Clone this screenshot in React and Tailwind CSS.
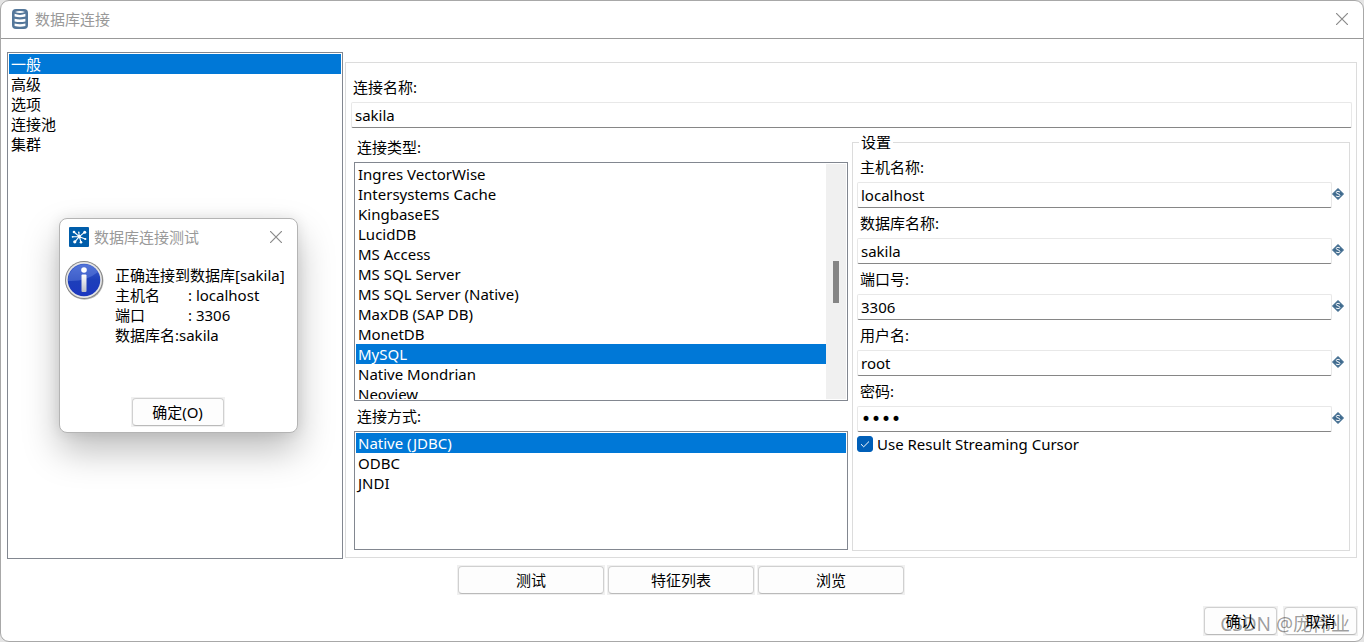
import { useState } from "react";

const sections = ["一般", "高级", "选项", "连接池", "集群"];

const databaseTypes = [
  "Ingres VectorWise",
  "Intersystems Cache",
  "KingbaseES",
  "LucidDB",
  "MS Access",
  "MS SQL Server",
  "MS SQL Server (Native)",
  "MaxDB (SAP DB)",
  "MonetDB",
  "MySQL",
  "Native Mondrian",
  "Neoview",
];

const accessMethods = ["Native (JDBC)", "ODBC", "JNDI"];

const settings = [
  { id: "host", label: "主机名称:", value: "localhost" },
  { id: "database", label: "数据库名称:", value: "sakila" },
  { id: "port", label: "端口号:", value: "3306" },
  { id: "user", label: "用户名:", value: "root" },
  { id: "password", label: "密码:", value: "pass", type: "password" },
];

function DatabaseIcon() {
  return (
    <svg className="h-5 w-4 shrink-0" viewBox="0 0 16 20" aria-hidden="true">
      <rect x="0" y="0" width="16" height="20" rx="4" fill="#54779a" />
      <path d="M3 3Q8 1 13 3Q8 4.8 3 3Z" fill="#fff" />
      <path d="M2.6 4.8Q8 7 13.4 4.8V7.6Q8 9 2.6 7.6Z" fill="#fff" />
      <path d="M2.6 9.8Q8 11.2 13.4 9.8V12.4Q8 13.8 2.6 12.4Z" fill="#fff" />
      <path d="M2.6 14.6Q8 16 13.4 14.6V17Q8 18.4 2.6 17Z" fill="#fff" />
    </svg>
  );
}

function CloseIcon() {
  return (
    <svg className="h-3 w-3" viewBox="0 0 12 12" fill="none" stroke="#8a8a8a" strokeWidth="1.2" aria-hidden="true">
      <path d="M0 0L12 12M12 0L0 12" />
    </svg>
  );
}

function HubIcon() {
  return (
    <svg className="h-5 w-5 shrink-0" viewBox="0 0 20 20" aria-hidden="true">
      <rect width="20" height="20" rx="1" fill="#005daa" />
      <path
        d="M10.3 9.7L5 5M10.3 9.7L9.8 5.5M10.3 9.7L15.7 5.2M10.3 9.7L3.6 9.8M10.3 9.7L16.3 12M10.3 9.7L5.8 14.8M10.3 9.7L12 15.2"
        stroke="#fff"
        strokeWidth="1.1"
        fill="none"
      />
      <g fill="#fff">
        <circle cx="10.3" cy="9.7" r="1.6" />
        <circle cx="5" cy="5" r="1.3" />
        <circle cx="9.8" cy="5.2" r="0.8" />
        <circle cx="15.7" cy="5.2" r="1.5" />
        <circle cx="3.6" cy="9.8" r="0.9" />
        <circle cx="16.3" cy="12" r="1.1" />
        <circle cx="5.8" cy="14.8" r="1.6" />
        <circle cx="12" cy="15.2" r="1.3" />
      </g>
    </svg>
  );
}

function InfoIcon() {
  return (
    <svg className="h-10 w-10 shrink-0" viewBox="0 0 40 40" aria-hidden="true">
      <defs>
        <linearGradient id="info-ball" x1="0" y1="0" x2="0" y2="1">
          <stop offset="0" stopColor="#3f62cf" />
          <stop offset="0.5" stopColor="#1d3fb9" />
          <stop offset="1" stopColor="#1b36c0" />
        </linearGradient>
        <linearGradient id="info-stem" x1="0" y1="0" x2="0" y2="1">
          <stop offset="0" stopColor="#ffffff" />
          <stop offset="1" stopColor="#b9bdc9" />
        </linearGradient>
      </defs>
      <circle cx="20.5" cy="20.8" r="19" fill="#b5b5b5" />
      <circle cx="20" cy="20" r="19" fill="#858585" />
      <circle cx="20" cy="20" r="18" fill="#e6e6e6" />
      <circle cx="20" cy="20" r="16.3" fill="url(#info-ball)" />
      <path d="M4 21A16.3 16.3 0 0 1 34 12Q22 22 4 21Z" fill="#7f9bea" opacity="0.35" />
      <circle cx="20" cy="10" r="2.8" fill="#fff" />
      <rect x="17.5" y="14.5" width="5" height="17.5" rx="1" fill="url(#info-stem)" />
    </svg>
  );
}

function VariableIcon() {
  return (
    <svg className="h-3 w-3 shrink-0" viewBox="0 0 12 12" aria-hidden="true">
      <path d="M6 0.5L11.5 6L6 11.5L0.5 6Z" fill="#3f6a8e" stroke="#3f6a8e" strokeLinejoin="round" />
      <path
        d="M8 4.2Q7.2 3.3 6 3.3Q4.3 3.3 4.3 4.5Q4.3 5.6 6 5.9Q7.9 6.3 7.9 7.4Q7.9 8.7 6 8.7Q4.7 8.7 3.9 7.8"
        fill="none"
        stroke="#fff"
        strokeWidth="1"
      />
    </svg>
  );
}

function PushButton({ className, children }) {
  return (
    <span className="flex bg-[#f0f0f0] p-px">
      <button
        type="button"
        className={`h-7 rounded-[4px] border border-[#d0d0d0] border-b-[#bababa] bg-[#fdfdfd] text-center ${className}`}
      >
        {children}
      </button>
    </span>
  );
}

function OptionList({ label, items, initial }) {
  const [selected, setSelected] = useState(initial);
  return (
    <ul role="listbox" aria-label={label} className="min-w-0 flex-1 overflow-hidden">
      {items.map((item) => (
        <li
          key={item}
          role="option"
          aria-selected={item === selected}
          onClick={() => setSelected(item)}
          className={`h-5 cursor-default px-0.5 leading-5 whitespace-nowrap ${
            item === selected ? "bg-[#0078d7] text-white" : ""
          }`}
        >
          {item}
        </li>
      ))}
    </ul>
  );
}

function TextField({ id, value, type = "text" }) {
  return (
    <input
      id={id}
      type={type}
      defaultValue={value}
      className={`h-[26px] w-full min-w-0 flex-1 rounded-[2px] border border-[#e8e8e8] border-b-[#868686] bg-white px-[3px] outline-none ${
        type === "password" ? "font-['DejaVu_Sans',sans-serif] text-[17px]" : ""
      }`}
    />
  );
}

function TestResultDialog() {
  return (
    <section
      role="dialog"
      aria-label="数据库连接测试"
      className="absolute top-[218px] left-[59px] flex h-[215px] w-[239px] flex-col rounded-lg border border-[#b4b4b4] bg-white shadow-[0_18px_36px_rgba(0,0,0,0.26),0_0_14px_rgba(0,0,0,0.09)]"
    >
      <header className="flex h-9 items-center gap-[5px] pr-[15px] pl-[9px] text-[#999999]">
        <HubIcon />
        <h2 className="flex-1">数据库连接测试</h2>
        <button type="button" aria-label="关闭测试结果">
          <CloseIcon />
        </button>
      </header>
      <div className="flex gap-[11px] pt-[5px] pl-1">
        <InfoIcon />
        <div className="pt-[5px] leading-5 whitespace-nowrap">
          <p>正确连接到数据库[sakila]</p>
          <p className="flex">
            <span className="w-[73px]">主机名</span>: localhost
          </p>
          <p className="flex">
            <span className="w-[73px]">端口</span>: 3306
          </p>
          <p>数据库名:sakila</p>
        </div>
      </div>
      <footer className="mt-auto mb-[5px] flex justify-center pr-0.5">
        <PushButton className="w-[92px]">确定(O)</PushButton>
      </footer>
    </section>
  );
}

export default function App() {
  return (
    <div className="relative min-h-screen bg-[#e4e4e4] font-['Noto_Sans','Noto_Sans_CJK_SC',sans-serif] text-[15px] leading-5 text-black">
      <main className="flex min-h-screen flex-col rounded-[9px] border border-[#a8a8a8] bg-white">
        <header className="flex h-[38px] items-center gap-[7px] border-b border-[#999999] pr-[15px] pb-[2px] pl-[11px] text-[#999999]">
          <DatabaseIcon />
          <h1 className="flex-1">数据库连接</h1>
          <button type="button" aria-label="关闭">
            <CloseIcon />
          </button>
        </header>

        <div className="flex gap-[2px] pt-[13px] pr-[6px] pl-[6px]">
          <nav className="flex h-[507px] w-[336px] shrink-0 border border-[#828790] p-px">
            <OptionList label="分类" items={sections} initial="一般" />
          </nav>

          <div className="mt-[10px] flex h-[496px] min-w-0 flex-1 flex-col border border-[#dcdcdc] pt-[10px] pr-1 pl-[5px]">
            <label htmlFor="connection-name" className="px-0.5 leading-[29px]">
              连接名称:
            </label>
            <div className="flex">
              <TextField id="connection-name" value="sakila" />
            </div>

            <div className="grid grid-cols-2 gap-[3px] pt-1 pr-[2px]">
              <div className="flex min-w-0 flex-col pr-px pl-[3px]">
                <h2 className="px-[3px] leading-[30px]">连接类型:</h2>
                <div className="flex h-[239px] border border-[#828790] p-px">
                  <OptionList label="连接类型" items={databaseTypes} initial="MySQL" />
                  <div className="w-5 shrink-0 bg-[#f0f0f0] pt-[97px]">
                    <div className="mx-auto h-[42px] w-[6px] bg-[#858585]" />
                  </div>
                </div>
                <h2 className="px-[3px] leading-[30px]">连接方式:</h2>
                <div className="flex h-[119px] border border-[#828790] p-px">
                  <OptionList label="连接方式" items={accessMethods} initial="Native (JDBC)" />
                </div>
              </div>

              <fieldset className="h-[419px] min-w-0 border border-[#dcdcdc] pr-[5px] pl-1">
                <legend className="ml-[2px] px-[2px] leading-5">设置</legend>
                {settings.map((field) => (
                  <div key={field.id}>
                    <label htmlFor={field.id} className="block px-[3px] leading-[30px]">
                      {field.label}
                    </label>
                    <div className="flex">
                      <TextField id={field.id} value={field.value} type={field.type} />
                      <span className="pt-[6px]">
                        <VariableIcon />
                      </span>
                    </div>
                  </div>
                ))}
                <label className="flex items-center gap-1 pt-[2px]">
                  <span className="relative flex h-4 w-4">
                    <input
                      type="checkbox"
                      defaultChecked
                      className="peer h-4 w-4 appearance-none rounded-[3px] border border-[#005fb8] bg-white checked:bg-[#005fb8]"
                    />
                    <svg
                      className="pointer-events-none absolute inset-0 hidden h-4 w-4 peer-checked:block"
                      viewBox="0 0 16 16"
                      fill="none"
                      stroke="#fff"
                      aria-hidden="true"
                    >
                      <path d="M4 8.2L6.7 10.8L12 5.5" />
                    </svg>
                  </span>
                  Use Result Streaming Cursor
                </label>
              </fieldset>
            </div>
          </div>
        </div>

        <div className="flex justify-center gap-[2px] pt-[6px] pr-0.5">
          <PushButton className="w-[146px]">测试</PushButton>
          <PushButton className="w-[146px]">特征列表</PushButton>
          <PushButton className="w-[146px]">浏览</PushButton>
        </div>
        <footer className="flex justify-end gap-[5px] pt-[11px] pr-[5px]">
          <PushButton className="w-[73px]">确认</PushButton>
          <PushButton className="w-[73px]">取消</PushButton>
        </footer>
      </main>

      <TestResultDialog />
      <p className="pointer-events-none absolute right-[14px] bottom-[6px] text-[19px] leading-6 text-black/40">
        CSDN @庞伟业
      </p>
    </div>
  );
}
